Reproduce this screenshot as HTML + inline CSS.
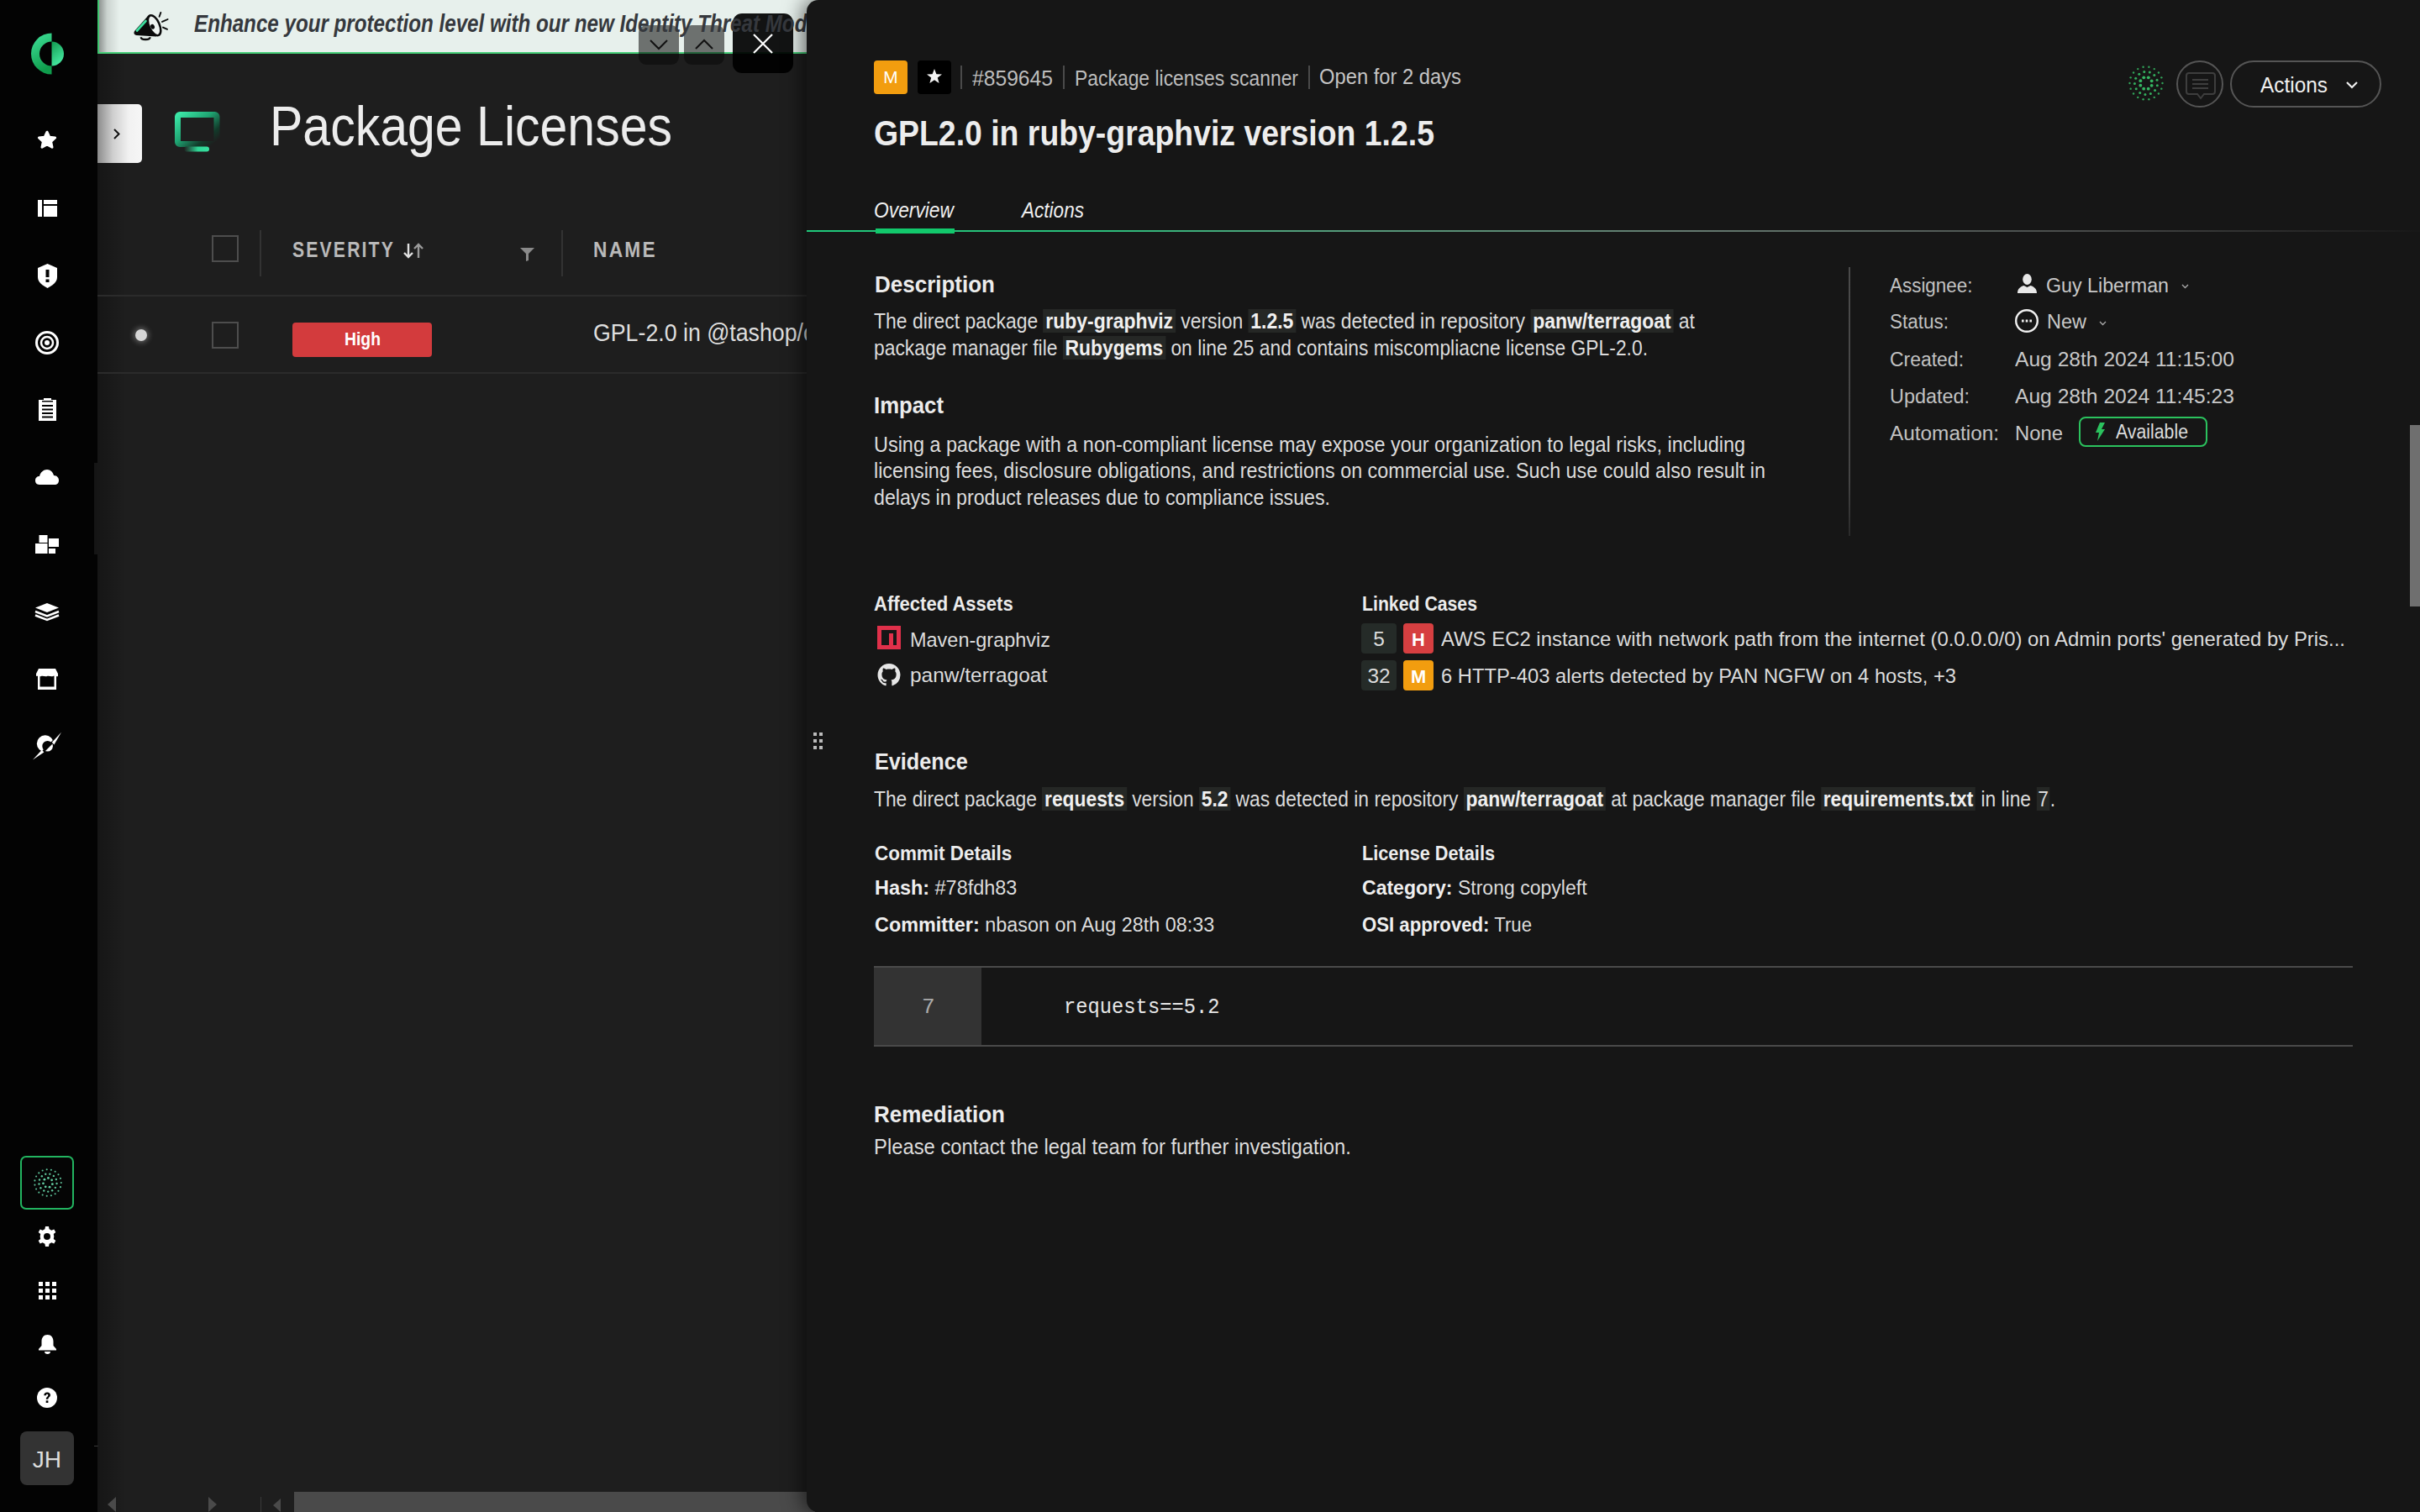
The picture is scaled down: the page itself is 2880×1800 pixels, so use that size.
<!DOCTYPE html>
<html><head><meta charset="utf-8"><style>
html,body{margin:0;padding:0}
body{width:2880px;height:1800px;overflow:hidden;position:relative;background:#1e1e1e;font-family:"Liberation Sans",sans-serif}
.a{position:absolute}
.t{position:absolute;white-space:nowrap;line-height:1;transform-origin:0 0}
.t b{font-weight:700;color:#efefef}
.hl{background:#252725;font-weight:700;color:#f0f0f0;padding:0 3px}
.hl2{background:#252725;padding:0 2px}
svg{position:absolute;overflow:visible}

</style></head><body>
<!-- sidebar -->
<div class="a" style="left:0;top:0;width:116px;height:1800px;background:#030303"></div>
<div class="a" style="left:112px;top:551px;width:4px;height:109px;background:#151515"></div>
<div class="a" style="left:112px;top:1721px;width:5px;height:1px;background:#3a3a3a"></div>
<!-- logo -->
<svg style="left:36px;top:39px" width="42" height="50" viewBox="0 0 42 50">
 <defs><linearGradient id="lg1" x1="0" y1="0" x2="0.3" y2="1"><stop offset="0" stop-color="#40e49c"/><stop offset="1" stop-color="#0f9c4c"/></linearGradient>
 <linearGradient id="lg2" x1="0" y1="0" x2="0.4" y2="1"><stop offset="0" stop-color="#129a50"/><stop offset="1" stop-color="#45e8a0"/></linearGradient></defs>
 <path d="M25.5 0.5 A24.5 24.5 0 0 0 25.5 49.5 L25.5 39.5 A14.5 14.5 0 0 1 25.5 10.5 Z" fill="url(#lg1)"/>
 <path d="M25.5 10.5 A14.5 14.5 0 0 1 25.5 39.5 Z" fill="url(#lg2)"/>
</svg>
<!-- star -->
<svg style="left:44px;top:155px" width="24" height="23" viewBox="0 0 24 23"><path d="M12 2.2 L14.9 8.3 L21.6 9 L16.6 13.6 L18 20.3 L12 16.9 L6 20.3 L7.4 13.6 L2.4 9 L9.1 8.3 Z" fill="#fff" stroke="#fff" stroke-width="3" stroke-linejoin="round"/></svg>
<!-- layout -->
<svg style="left:45px;top:238px" width="23" height="20" viewBox="0 0 23 20"><rect x="0" y="0" width="5" height="20" fill="#fff"/><rect x="7" y="0" width="16" height="5" fill="#fff"/><rect x="7" y="7" width="16" height="13" fill="#fff"/></svg>
<!-- shield -->
<svg style="left:45px;top:314px" width="23" height="29" viewBox="0 0 23 29"><path d="M11.5 0 L23 5 L23 16 C23 22 17 26 11.5 29 C6 26 0 22 0 16 L0 5 Z" fill="#fff"/><rect x="9.5" y="7" width="4" height="9" fill="#030303"/><rect x="9.5" y="18.5" width="4" height="3.5" fill="#030303"/></svg>
<!-- target -->
<svg style="left:42px;top:394px" width="28" height="28" viewBox="0 0 28 28"><circle cx="14" cy="14" r="12.5" fill="none" stroke="#fff" stroke-width="3"/><circle cx="14" cy="14" r="7" fill="none" stroke="#fff" stroke-width="2.5"/><circle cx="14" cy="14" r="3" fill="#fff"/></svg>
<!-- clipboard -->
<svg style="left:46px;top:474px" width="21" height="27" viewBox="0 0 21 27"><rect x="0" y="2" width="21" height="25" fill="#fff"/><rect x="6" y="0" width="9" height="4" fill="#fff"/><rect x="4" y="3" width="13" height="1.5" fill="#030303"/><rect x="4" y="8" width="13" height="2" fill="#030303"/><rect x="4" y="12.5" width="13" height="2" fill="#030303"/><rect x="4" y="17" width="13" height="2" fill="#030303"/><rect x="4" y="21.5" width="13" height="2" fill="#030303"/></svg>
<!-- cloud -->
<svg style="left:42px;top:559px" width="28" height="18" viewBox="0 0 28 18"><path d="M5 18 C1 18 0 15 0 13 C0 10 2 8 5 8 C6 3 10 0 14 0 C18 0 21 3 22 7 C26 7 28 10 28 13 C28 16 26 18 23 18 Z" fill="#fff"/></svg>
<!-- blocks -->
<svg style="left:42px;top:637px" width="28" height="22" viewBox="0 0 28 22"><rect x="4.5" y="0" width="10" height="9" fill="#fff"/><rect x="0" y="10" width="14.5" height="12" fill="#fff"/><rect x="16" y="4" width="12" height="10" fill="#fff"/><rect x="16" y="16" width="8" height="6" fill="#fff"/></svg>
<!-- layers -->
<svg style="left:42px;top:718px" width="28" height="21" viewBox="0 0 28 21"><path d="M14 0 L28 5.5 L14 11 L0 5.5 Z" fill="#fff"/><path d="M0 10 L14 15.5 L28 10" fill="none" stroke="#fff" stroke-width="2.5"/><path d="M0 14.5 L14 20 L28 14.5" fill="none" stroke="#fff" stroke-width="2.5"/></svg>
<!-- store -->
<svg style="left:43px;top:796px" width="26" height="25" viewBox="0 0 26 25"><path d="M3 0 L23 0 L26 6 L26 9 C24 10 22 8 20 9 C18 10 15 8 13 9 C11 10 8 8 6 9 C4 10 2 8 0 9 L0 6 Z" fill="#fff"/><path d="M2 8 L2 25 L24 25 L24 8 L21.5 9 L21.5 21.5 L4.5 21.5 L4.5 9 Z" fill="#fff"/></svg>
<!-- compass -->
<svg style="left:34px;top:866px" width="44" height="44" viewBox="0 0 44 44">
 <defs>
  <clipPath id="cpA"><polygon points="-10,-10 54,-10 -10,54" transform="translate(-1.0,-1.0) translate(0.0,2.0)"/></clipPath>
  <clipPath id="cpB"><polygon points="54,-10 54,54 -10,54" transform="translate(1.0,1.0) translate(0.0,2.0)"/></clipPath>
 </defs>
 <path clip-path="url(#cpA)" fill-rule="evenodd" fill="#fff" d="M9.8 19.2 A10 10 0 1 0 29.8 19.2 A10 10 0 1 0 9.8 19.2 Z M16.3 22.3 A6.3 6.3 0 1 0 28.9 22.3 A6.3 6.3 0 1 0 16.3 22.3 Z"/>
 <circle clip-path="url(#cpB)" cx="22.6" cy="22.3" r="6.3" fill="#fff"/>
 <polygon points="5,38.6 15.8,26.8 18.4,29.4" fill="#fff"/>
 <polygon points="39,5.8 27.8,17.8 30.4,20.4" fill="#fff"/>
</svg>

<!-- bottom sidebar -->
<div class="a" style="left:24px;top:1376px;width:60px;height:60px;border:2px solid #22b460;border-radius:7px;background:#050505"></div>
<svg style="left:33px;top:1384px" width="48" height="48" viewBox="-24 -24 48 48" id="dots1"><circle cx="5.35" cy="1.65" r="1.40" fill="#6ee4b4" fill-opacity="0.9"/><circle cx="2.04" cy="5.21" r="1.40" fill="#6ee4b4" fill-opacity="0.9"/><circle cx="-2.80" cy="4.85" r="1.40" fill="#6ee4b4" fill-opacity="0.9"/><circle cx="-5.54" cy="0.83" r="1.40" fill="#6ee4b4" fill-opacity="0.9"/><circle cx="-4.10" cy="-3.81" r="1.40" fill="#6ee4b4" fill-opacity="0.9"/><circle cx="0.42" cy="-5.58" r="1.40" fill="#6ee4b4" fill-opacity="0.9"/><circle cx="4.63" cy="-3.15" r="1.40" fill="#6ee4b4" fill-opacity="0.9"/><circle cx="10.55" cy="1.06" r="1.20" fill="#6ee4b4" fill-opacity="0.85"/><circle cx="8.85" cy="5.84" r="1.20" fill="#6ee4b4" fill-opacity="0.85"/><circle cx="5.12" cy="9.28" r="1.20" fill="#6ee4b4" fill-opacity="0.85"/><circle cx="0.22" cy="10.60" r="1.20" fill="#6ee4b4" fill-opacity="0.85"/><circle cx="-4.73" cy="9.49" r="1.20" fill="#6ee4b4" fill-opacity="0.85"/><circle cx="-8.60" cy="6.20" r="1.20" fill="#6ee4b4" fill-opacity="0.85"/><circle cx="-10.49" cy="1.50" r="1.20" fill="#6ee4b4" fill-opacity="0.85"/><circle cx="-9.99" cy="-3.55" r="1.20" fill="#6ee4b4" fill-opacity="0.85"/><circle cx="-7.19" cy="-7.79" r="1.20" fill="#6ee4b4" fill-opacity="0.85"/><circle cx="-2.75" cy="-10.24" r="1.20" fill="#6ee4b4" fill-opacity="0.85"/><circle cx="2.32" cy="-10.34" r="1.20" fill="#6ee4b4" fill-opacity="0.85"/><circle cx="6.86" cy="-8.08" r="1.20" fill="#6ee4b4" fill-opacity="0.85"/><circle cx="9.83" cy="-3.96" r="1.20" fill="#6ee4b4" fill-opacity="0.85"/><circle cx="15.80" cy="0.00" r="1.05" fill="#6ee4b4" fill-opacity="0.85"/><circle cx="14.94" cy="5.13" r="1.05" fill="#6ee4b4" fill-opacity="0.85"/><circle cx="12.47" cy="9.70" r="1.05" fill="#6ee4b4" fill-opacity="0.85"/><circle cx="8.64" cy="13.23" r="1.05" fill="#6ee4b4" fill-opacity="0.85"/><circle cx="3.88" cy="15.32" r="1.05" fill="#6ee4b4" fill-opacity="0.85"/><circle cx="-1.30" cy="15.75" r="1.05" fill="#6ee4b4" fill-opacity="0.85"/><circle cx="-6.35" cy="14.47" r="1.05" fill="#6ee4b4" fill-opacity="0.85"/><circle cx="-10.70" cy="11.62" r="1.05" fill="#6ee4b4" fill-opacity="0.85"/><circle cx="-13.90" cy="7.52" r="1.05" fill="#6ee4b4" fill-opacity="0.85"/><circle cx="-15.58" cy="2.60" r="1.05" fill="#6ee4b4" fill-opacity="0.85"/><circle cx="-15.58" cy="-2.60" r="1.05" fill="#6ee4b4" fill-opacity="0.85"/><circle cx="-13.90" cy="-7.52" r="1.05" fill="#6ee4b4" fill-opacity="0.85"/><circle cx="-10.70" cy="-11.62" r="1.05" fill="#6ee4b4" fill-opacity="0.85"/><circle cx="-6.35" cy="-14.47" r="1.05" fill="#6ee4b4" fill-opacity="0.85"/><circle cx="-1.30" cy="-15.75" r="1.05" fill="#6ee4b4" fill-opacity="0.85"/><circle cx="3.88" cy="-15.32" r="1.05" fill="#6ee4b4" fill-opacity="0.85"/><circle cx="8.64" cy="-13.23" r="1.05" fill="#6ee4b4" fill-opacity="0.85"/><circle cx="12.47" cy="-9.70" r="1.05" fill="#6ee4b4" fill-opacity="0.85"/><circle cx="14.94" cy="-5.13" r="1.05" fill="#6ee4b4" fill-opacity="0.85"/></svg>
<!-- gear -->
<svg style="left:44px;top:1460px" width="24" height="24" viewBox="0 0 24 24"><path fill="#fff" d="M10 0 H14 L14.6 3.2 A9 9 0 0 1 17.3 4.7 L20.3 3.5 L22.3 7 L19.8 9.1 A9 9 0 0 1 19.8 14.9 L22.3 17 L20.3 20.5 L17.3 19.3 A9 9 0 0 1 14.6 20.8 L14 24 H10 L9.4 20.8 A9 9 0 0 1 6.7 19.3 L3.7 20.5 L1.7 17 L4.2 14.9 A9 9 0 0 1 4.2 9.1 L1.7 7 L3.7 3.5 L6.7 4.7 A9 9 0 0 1 9.4 3.2 Z M12 8 A4 4 0 1 0 12 16 A4 4 0 1 0 12 8 Z"/></svg>
<!-- grid -->
<svg style="left:46px;top:1526px" width="21" height="21" viewBox="0 0 21 21" fill="#fff"><rect x="0" y="0" width="5" height="5"/><rect x="8" y="0" width="5" height="5"/><rect x="16" y="0" width="5" height="5"/><rect x="0" y="8" width="5" height="5"/><rect x="8" y="8" width="5" height="5"/><rect x="16" y="8" width="5" height="5"/><rect x="0" y="16" width="5" height="5"/><rect x="8" y="16" width="5" height="5"/><rect x="16" y="16" width="5" height="5"/></svg>
<!-- bell -->
<svg style="left:46px;top:1589px" width="21" height="23" viewBox="0 0 21 23" fill="#fff"><path d="M10.5 0 C15 0 17.5 3.5 17.5 8 L17.5 13 L21 17 L21 18.5 L0 18.5 L0 17 L3.5 13 L3.5 8 C3.5 3.5 6 0 10.5 0 Z"/><path d="M7 20 L14 20 C14 22 12.5 23 10.5 23 C8.5 23 7 22 7 20 Z"/></svg>
<!-- help -->
<svg style="left:44px;top:1652px" width="24" height="24" viewBox="0 0 24 24"><circle cx="12" cy="12" r="12" fill="#fff"/><path d="M8.3 9.2 C8.3 6.8 10 5.5 12.2 5.5 C14.5 5.5 16 6.9 16 8.8 C16 11.3 13.3 11.6 13.3 13.8 L10.8 13.8 C10.8 10.8 13.3 10.6 13.3 8.9 C13.3 8.2 12.8 7.7 12 7.7 C11.2 7.7 10.8 8.3 10.8 9.2 Z" fill="#030303"/><rect x="10.7" y="15.3" width="2.7" height="2.7" fill="#030303"/></svg>
<!-- JH box -->
<div class="a" style="left:24px;top:1704px;width:64px;height:64px;border-radius:8px;background:#333"></div>

<!-- main area -->
<div class="a" style="left:116px;top:64px;width:34px;height:1736px;background:linear-gradient(to right,rgba(0,0,0,0.28),rgba(0,0,0,0))"></div>
<div class="a" style="left:116px;top:0;width:2764px;height:62px;background:#e7f0ec;border-bottom:2px solid #46cf78"></div>
<div class="a" style="left:116px;top:0;width:2px;height:64px;background:#3ec46e"></div>
<div class="a" style="left:118px;top:0;width:24px;height:62px;background:linear-gradient(to right,rgba(0,0,0,0.38),rgba(0,0,0,0.12) 40%,rgba(0,0,0,0))"></div>
<!-- megaphone -->
<svg style="left:159px;top:14px" width="42" height="35" viewBox="0 0 42 35">
 <path d="M1.5 22.5 L17.5 4.5 L27 29.5 L3.5 28 C0.5 27.5 -0.5 25 1.5 22.5 Z" fill="#0a0a0a"/>
 <ellipse cx="24.6" cy="16.2" rx="6.2" ry="12.8" transform="rotate(-24 24.6 16.2)" fill="#eef3f0" stroke="#0a0a0a" stroke-width="2.5"/>
 <ellipse cx="22.6" cy="17.8" rx="2.3" ry="3" transform="rotate(-24 22.6 17.8)" fill="#0a0a0a"/>
 <path d="M4 22.5 L14.5 11" stroke="#3ee0a0" stroke-width="2.6" stroke-linecap="round"/>
 <path d="M8.8 30.2 C8.8 34 19.5 34 19.5 30.2" fill="none" stroke="#0a0a0a" stroke-width="2.4"/>
 <path d="M32.3 1 L30.6 5.8" stroke="#0a0a0a" stroke-width="1.9" stroke-linecap="round"/>
 <path d="M40.6 9 L34 11.9" stroke="#0a0a0a" stroke-width="1.9" stroke-linecap="round"/>
 <path d="M35 18.6 L40 20.8" stroke="#0a0a0a" stroke-width="1.9" stroke-linecap="round"/>
</svg>
<!-- banner buttons -->
<div class="a" style="left:760px;top:30px;width:48px;height:47px;border-radius:9px;background:rgba(10,10,10,0.55)"></div>
<svg style="left:773px;top:47px" width="22" height="12" viewBox="0 0 22 12"><path d="M1 1 L11 11 L21 1" fill="none" stroke="#111" stroke-width="2"/></svg>
<div class="a" style="left:814px;top:30px;width:48px;height:47px;border-radius:9px;background:rgba(10,10,10,0.55)"></div>
<svg style="left:827px;top:47px" width="22" height="12" viewBox="0 0 22 12"><path d="M1 11 L11 1 L21 11" fill="none" stroke="#111" stroke-width="2"/></svg>
<div class="a" style="left:872px;top:16px;width:72px;height:71px;border-radius:11px;background:rgba(0,0,0,0.92)"></div>
<svg style="left:896px;top:40px" width="24" height="24" viewBox="0 0 24 24"><path d="M1 1 L23 23 M23 1 L1 23" stroke="#fff" stroke-width="2.2"/></svg>

<!-- expand btn -->
<div class="a" style="left:116px;top:124px;width:53px;height:70px;border-radius:0 5px 5px 0;background:linear-gradient(to right,#8c8c8c 0%,#cfcfcf 35%,#f1f1f1 70%,#f6f6f6 100%)"></div>
<svg style="left:135px;top:153px" width="8" height="13" viewBox="0 0 8 13"><path d="M1 1 L6.5 6.5 L1 12" fill="none" stroke="#111" stroke-width="2"/></svg>
<!-- monitor icon -->
<svg style="left:208px;top:133px" width="56" height="48" viewBox="0 0 56 48">
 <defs><linearGradient id="mg" x1="0" y1="0" x2="1" y2="0.9"><stop offset="0" stop-color="#3be6a6"/><stop offset="0.45" stop-color="#1fa472"/><stop offset="0.8" stop-color="#123a2a"/><stop offset="1" stop-color="#1e1e1e"/></linearGradient>
 <linearGradient id="mg2" x1="0" y1="0" x2="1" y2="0"><stop offset="0" stop-color="#1e1e1e"/><stop offset="0.55" stop-color="#2fd595"/><stop offset="1" stop-color="#38e0a0"/></linearGradient></defs>
 <rect x="3.5" y="3.5" width="46.5" height="35" rx="2.5" fill="none" stroke="url(#mg)" stroke-width="7"/>
 <rect x="11" y="41.5" width="30" height="6" rx="3" fill="url(#mg2)"/>
</svg>

<!-- table header -->
<div class="a" style="left:252px;top:280px;width:28px;height:28px;border:2px solid #4d4d4d"></div>
<div class="a" style="left:309px;top:274px;width:2px;height:55px;background:#333"></div>
<svg style="left:480px;top:289px" width="25" height="19" viewBox="0 0 25 19"><path d="M6 1 V17 M1 12 L6 17 L11 12" fill="none" stroke="#e0e0e0" stroke-width="2.4"/><path d="M18 18 V2 M13 7 L18 2 L23 7" fill="none" stroke="#9a9a9a" stroke-width="2.4"/></svg>
<svg style="left:619px;top:294px" width="17" height="17" viewBox="0 0 17 17"><path d="M0 1 H17 L10 8 V16 L7 17 V8 Z" fill="#8a8a8a"/></svg>
<div class="a" style="left:668px;top:274px;width:2px;height:55px;background:#333"></div>
<div class="a" style="left:116px;top:351px;width:844px;height:2px;background:#2b2b2b"></div>
<div class="a" style="left:116px;top:443px;width:844px;height:2px;background:#2b2b2b"></div>
<!-- row -->
<div class="a" style="left:161px;top:392px;width:14px;height:14px;border-radius:50%;background:#d6d6d6;box-shadow:0 0 6px 2px rgba(255,255,255,0.3)"></div>
<div class="a" style="left:252px;top:383px;width:28px;height:28px;border:2px solid #4d4d4d"></div>
<div class="a" style="left:348px;top:384px;width:166px;height:41px;border-radius:4px;background:#d33b3d"></div>
<!-- bottom scrollbar -->
<svg style="left:126px;top:1782px" width="14" height="18" viewBox="0 0 14 18"><path d="M12 0 L2 9 L12 18 Z" fill="#4a4a4a"/></svg>
<svg style="left:246px;top:1782px" width="14" height="18" viewBox="0 0 14 18"><path d="M2 0 L12 9 L2 18 Z" fill="#4a4a4a"/></svg>
<div class="a" style="left:310px;top:1782px;width:1px;height:18px;background:#3a3a3a"></div>
<svg style="left:324px;top:1784px" width="12" height="16" viewBox="0 0 12 16"><path d="M10 0 L1 8 L10 16 Z" fill="#4a4a4a"/></svg>
<div class="a" style="left:350px;top:1776px;width:620px;height:24px;background:#4a4a4a"></div>
<div class="t" id="banner" style="left:231.0px;top:14.3px;font-size:28.64px;font-weight:700;font-style:italic;color:#35383d;font-family:'Liberation Sans',sans-serif;transform:scaleX(0.8446);">Enhance your protection level with our new Identity Threat Mod</div>
<div class="t" id="pkg" style="left:321.0px;top:115.6px;font-size:67.17px;font-weight:400;font-style:normal;color:#ececec;font-family:'Liberation Sans',sans-serif;transform:scaleX(0.8788);">Package Licenses</div>
<div class="t" id="sev" style="left:348.0px;top:284.8px;font-size:24.99px;font-weight:700;font-style:normal;color:#b9b9b9;font-family:'Liberation Sans',sans-serif;letter-spacing:2.5px;transform:scaleX(0.8497);">SEVERITY</div>
<div class="t" id="name" style="left:706.0px;top:284.8px;font-size:24.99px;font-weight:700;font-style:normal;color:#b9b9b9;font-family:'Liberation Sans',sans-serif;letter-spacing:2.5px;transform:scaleX(0.9095);">NAME</div>
<div class="t" id="gpl" style="left:706.0px;top:382.3px;font-size:29.16px;font-weight:400;font-style:normal;color:#dedede;font-family:'Liberation Sans',sans-serif;transform:scaleX(0.9167);">GPL-2.0 in @tashop/core</div>
<div class="t" id="high" style="left:409.5px;top:391.6px;font-size:22.91px;font-weight:700;font-style:normal;color:#ffffff;font-family:'Liberation Sans',sans-serif;transform:scaleX(0.8449);">High</div>
<div class="t" id="jh" style="left:38.8px;top:1724.2px;font-size:28.12px;font-weight:400;font-style:normal;color:#dddddd;font-family:'Liberation Sans',sans-serif;">JH</div>

<!-- drawer -->
<div class="a" style="left:960px;top:0;width:1920px;height:1800px;background:#161616;border-radius:14px 0 0 14px;box-shadow:-4px 0 24px rgba(0,0,0,0.6)"></div>
<!-- header badges -->
<div class="a" style="left:1040px;top:72px;width:40px;height:40px;border-radius:4px;background:#f29d0f"></div>
<div class="a" style="left:1092px;top:72px;width:40px;height:40px;border-radius:4px;background:#000"></div>
<svg style="left:1102px;top:81px" width="20" height="20" viewBox="0 0 20 20"><path d="M10 1 L12.4 7.2 L19 7.5 L13.8 11.6 L15.6 18 L10 14.3 L4.4 18 L6.2 11.6 L1 7.5 L7.6 7.2 Z" fill="#f4f4f4"/></svg>
<div class="a" style="left:1143px;top:78px;width:2px;height:28px;background:#4a4a4a"></div>
<div class="a" style="left:1265px;top:78px;width:2px;height:28px;background:#4a4a4a"></div>
<div class="a" style="left:1557px;top:78px;width:2px;height:28px;background:#4a4a4a"></div>
<!-- top right -->
<svg style="left:2526px;top:71px" width="56" height="56" viewBox="-28 -28 56 56" id="dots2"><circle cx="6.63" cy="2.80" r="1.90" fill="#38c86a" fill-opacity="0.9"/><circle cx="2.71" cy="6.67" r="1.90" fill="#38c86a" fill-opacity="0.9"/><circle cx="-2.80" cy="6.63" r="1.90" fill="#38c86a" fill-opacity="0.9"/><circle cx="-6.67" cy="2.71" r="1.90" fill="#38c86a" fill-opacity="0.9"/><circle cx="-6.63" cy="-2.80" r="1.90" fill="#38c86a" fill-opacity="0.9"/><circle cx="-2.71" cy="-6.67" r="1.90" fill="#38c86a" fill-opacity="0.9"/><circle cx="2.80" cy="-6.63" r="1.90" fill="#38c86a" fill-opacity="0.9"/><circle cx="6.67" cy="-2.71" r="1.90" fill="#38c86a" fill-opacity="0.9"/><circle cx="13.33" cy="2.70" r="1.50" fill="#38c86a" fill-opacity="0.85"/><circle cx="10.55" cy="8.59" r="1.50" fill="#38c86a" fill-opacity="0.85"/><circle cx="5.35" cy="12.50" r="1.50" fill="#38c86a" fill-opacity="0.85"/><circle cx="-1.08" cy="13.56" r="1.50" fill="#38c86a" fill-opacity="0.85"/><circle cx="-7.25" cy="11.50" r="1.50" fill="#38c86a" fill-opacity="0.85"/><circle cx="-11.77" cy="6.82" r="1.50" fill="#38c86a" fill-opacity="0.85"/><circle cx="-13.59" cy="0.57" r="1.50" fill="#38c86a" fill-opacity="0.85"/><circle cx="-12.29" cy="-5.81" r="1.50" fill="#38c86a" fill-opacity="0.85"/><circle cx="-8.19" cy="-10.86" r="1.50" fill="#38c86a" fill-opacity="0.85"/><circle cx="-2.20" cy="-13.42" r="1.50" fill="#38c86a" fill-opacity="0.85"/><circle cx="4.29" cy="-12.91" r="1.50" fill="#38c86a" fill-opacity="0.85"/><circle cx="9.80" cy="-9.43" r="1.50" fill="#38c86a" fill-opacity="0.85"/><circle cx="13.06" cy="-3.80" r="1.50" fill="#38c86a" fill-opacity="0.85"/><circle cx="19.50" cy="0.00" r="1.20" fill="#38c86a" fill-opacity="0.8"/><circle cx="18.32" cy="6.67" r="1.20" fill="#38c86a" fill-opacity="0.8"/><circle cx="14.94" cy="12.53" r="1.20" fill="#38c86a" fill-opacity="0.8"/><circle cx="9.75" cy="16.89" r="1.20" fill="#38c86a" fill-opacity="0.8"/><circle cx="3.39" cy="19.20" r="1.20" fill="#38c86a" fill-opacity="0.8"/><circle cx="-3.39" cy="19.20" r="1.20" fill="#38c86a" fill-opacity="0.8"/><circle cx="-9.75" cy="16.89" r="1.20" fill="#38c86a" fill-opacity="0.8"/><circle cx="-14.94" cy="12.53" r="1.20" fill="#38c86a" fill-opacity="0.8"/><circle cx="-18.32" cy="6.67" r="1.20" fill="#38c86a" fill-opacity="0.8"/><circle cx="-19.50" cy="0.00" r="1.20" fill="#38c86a" fill-opacity="0.8"/><circle cx="-18.32" cy="-6.67" r="1.20" fill="#38c86a" fill-opacity="0.8"/><circle cx="-14.94" cy="-12.53" r="1.20" fill="#38c86a" fill-opacity="0.8"/><circle cx="-9.75" cy="-16.89" r="1.20" fill="#38c86a" fill-opacity="0.8"/><circle cx="-3.39" cy="-19.20" r="1.20" fill="#38c86a" fill-opacity="0.8"/><circle cx="3.39" cy="-19.20" r="1.20" fill="#38c86a" fill-opacity="0.8"/><circle cx="9.75" cy="-16.89" r="1.20" fill="#38c86a" fill-opacity="0.8"/><circle cx="14.94" cy="-12.53" r="1.20" fill="#38c86a" fill-opacity="0.8"/><circle cx="18.32" cy="-6.67" r="1.20" fill="#38c86a" fill-opacity="0.8"/></svg>
<div class="a" style="left:2590px;top:72px;width:52px;height:52px;border:2px solid #555;border-radius:50%"></div>
<svg style="left:2601px;top:86px" width="36" height="32" viewBox="0 0 36 32"><path d="M4 1 H32 A3 3 0 0 1 35 4 V23 A3 3 0 0 1 32 26 H22 L18 31 L14 26 H4 A3 3 0 0 1 1 23 V4 A3 3 0 0 1 4 1 Z" fill="none" stroke="#3e3e3e" stroke-width="2"/><path d="M8 9 H27 M8 14 H27 M8 19 H27" stroke="#3e3e3e" stroke-width="1.8"/></svg>
<div class="a" style="left:2654px;top:72px;width:176px;height:52px;border:2px solid #555;border-radius:28px"></div>
<svg style="left:2792px;top:97px" width="14" height="9" viewBox="0 0 14 9"><path d="M1 1 L7 7 L13 1" fill="none" stroke="#f0f0f0" stroke-width="2.2"/></svg>
<!-- tabs -->
<div class="a" style="left:960px;top:274px;width:1920px;height:2px;background:linear-gradient(to right,#1fc87a 0%,#2bbf7c 18%,#52a07c 30%,#657a70 55%,#4a4d4c 78%,#2a2a2a 92%,#181818 100%)"></div>
<div class="a" style="left:1042px;top:272px;width:94px;height:6px;background:#12c86c"></div>
<!-- vertical sep -->
<div class="a" style="left:2200px;top:318px;width:2px;height:320px;background:linear-gradient(#4a4a4a,#444 80%,#2a2a2a)"></div>
<!-- meta icons -->
<svg style="left:2401px;top:326px" width="23" height="23" viewBox="0 0 23 23"><ellipse cx="11.5" cy="6.5" rx="5.3" ry="6.5" fill="#e8e8e8"/><path d="M0 23 C0 18 3 15.5 7.5 14 L11.5 16 L15.5 14 C20 15.5 23 18 23 23 Z" fill="#e8e8e8"/></svg>
<svg style="left:2596px;top:338px" width="9" height="6" viewBox="0 0 9 6"><path d="M1 1 L4.5 4.5 L8 1" fill="none" stroke="#aaa" stroke-width="1.3"/></svg>
<svg style="left:2398px;top:368px" width="28" height="28" viewBox="0 0 28 28"><circle cx="14" cy="14" r="12.8" fill="none" stroke="#f0f0f0" stroke-width="2.4"/><rect x="8" y="12.5" width="2.6" height="3" fill="#f0f0f0"/><rect x="12.7" y="12.5" width="2.6" height="3" fill="#f0f0f0"/><rect x="17.4" y="12.5" width="2.6" height="3" fill="#f0f0f0"/></svg>
<svg style="left:2498px;top:382px" width="9" height="6" viewBox="0 0 9 6"><path d="M1 1 L4.5 4.5 L8 1" fill="none" stroke="#aaa" stroke-width="1.3"/></svg>
<div class="a" style="left:2474px;top:496px;width:149px;height:32px;border:2px solid #2bc25e;border-radius:8px"></div>
<svg style="left:2494px;top:503px" width="12" height="22" viewBox="0 0 12 22"><path d="M5 0 L11 0 L7 8 L11 8 L2 22 L4 12 L0 12 Z" fill="#2bc25e"/></svg>
<!-- right scrollbar -->
<div class="a" style="left:2868px;top:506px;width:12px;height:216px;background:#6f6f6f"></div>
<!-- assets icons -->
<svg style="left:1044px;top:745px" width="28" height="28" viewBox="0 0 28 28"><rect x="0" y="0" width="28" height="28" fill="#e0304a"/><path d="M5 5 H23 V23 H19 V9 H14 V23 H5 Z" fill="#161616"/></svg>
<svg style="left:1044px;top:790px" width="28" height="27" viewBox="0 0 16 16"><path fill="#e6e6e6" d="M8 0C3.58 0 0 3.58 0 8c0 3.54 2.29 6.53 5.47 7.59.4.07.55-.17.55-.38 0-.19-.01-.82-.01-1.49-2.01.37-2.53-.49-2.69-.94-.09-.23-.48-.94-.82-1.13-.28-.15-.68-.52-.01-.53.63-.01 1.08.58 1.23.82.72 1.21 1.87.87 2.33.66.07-.52.28-.87.51-1.07-1.78-.2-3.64-.89-3.64-3.95 0-.87.31-1.59.82-2.15-.08-.2-.36-1.02.08-2.12 0 0 .67-.21 2.2.82.64-.18 1.32-.27 2-.27.68 0 1.36.09 2 .27 1.53-1.04 2.2-.82 2.2-.82.44 1.1.16 1.92.08 2.12.51.56.82 1.27.82 2.15 0 3.07-1.87 3.75-3.65 3.95.29.25.54.73.54 1.48 0 1.07-.01 1.93-.01 2.2 0 .21.15.46.55.38A8.013 8.013 0 0016 8c0-4.42-3.58-8-8-8z"/></svg>
<!-- linked badges -->
<div class="a" style="left:1620px;top:742px;width:42px;height:36px;border-radius:4px;background:#252b28"></div>
<div class="a" style="left:1670px;top:742px;width:36px;height:36px;border-radius:4px;background:#d63f41"></div>
<div class="a" style="left:1620px;top:786px;width:42px;height:36px;border-radius:4px;background:#252b28"></div>
<div class="a" style="left:1670px;top:786px;width:36px;height:36px;border-radius:4px;background:#f29d0f"></div>
<!-- drag handle -->
<svg style="left:968px;top:872px" width="12" height="22" viewBox="0 0 12 22" fill="#bbb"><rect x="0" y="0" width="4" height="4"/><rect x="7" y="0" width="4" height="4"/><rect x="0" y="8" width="4" height="4"/><rect x="7" y="8" width="4" height="4"/><rect x="0" y="16" width="4" height="4"/><rect x="7" y="16" width="4" height="4"/></svg>
<!-- code block -->
<div class="a" style="left:1040px;top:1150px;width:1760px;height:2px;background:#4a4a4a"></div>
<div class="a" style="left:1040px;top:1244px;width:1760px;height:2px;background:#4a4a4a"></div>
<div class="a" style="left:1040px;top:1152px;width:128px;height:92px;background:#333"></div>
<div class="t" id="num" style="left:1157.0px;top:80.8px;font-size:24.99px;font-weight:400;font-style:normal;color:#bdbdbd;font-family:'Liberation Sans',sans-serif;transform:scaleX(0.9868);">#859645</div>
<div class="t" id="scanner" style="left:1279.0px;top:80.8px;font-size:24.99px;font-weight:400;font-style:normal;color:#bdbdbd;font-family:'Liberation Sans',sans-serif;transform:scaleX(0.9164);">Package licenses scanner</div>
<div class="t" id="open" style="left:1570.0px;top:78.8px;font-size:24.99px;font-weight:400;font-style:normal;color:#c4c4c4;font-family:'Liberation Sans',sans-serif;transform:scaleX(0.9506);">Open for 2 days</div>
<div class="t" id="title" style="left:1040.0px;top:138.3px;font-size:42.18px;font-weight:700;font-style:normal;color:#ededed;font-family:'Liberation Sans',sans-serif;transform:scaleX(0.8866);">GPL2.0 in ruby-graphviz version 1.2.5</div>
<div class="t" id="tab1" style="left:1040.0px;top:237.0px;font-size:26.04px;font-weight:400;font-style:italic;color:#f0f0f0;font-family:'Liberation Sans',sans-serif;transform:scaleX(0.8756);">Overview</div>
<div class="t" id="tab2" style="left:1216.0px;top:237.0px;font-size:26.04px;font-weight:400;font-style:italic;color:#f0f0f0;font-family:'Liberation Sans',sans-serif;transform:scaleX(0.8668);">Actions</div>
<div class="t" id="actbtn" style="left:2690.0px;top:88.8px;font-size:24.99px;font-weight:400;font-style:normal;color:#f0f0f0;font-family:'Liberation Sans',sans-serif;transform:scaleX(0.9764);">Actions</div>
<div class="t" id="h_desc" style="left:1041.0px;top:324.6px;font-size:27.60px;font-weight:700;font-style:normal;color:#ececec;font-family:'Liberation Sans',sans-serif;transform:scaleX(0.9420);">Description</div>
<div class="t" id="d1" style="left:1040.0px;top:370.3px;font-size:24.99px;font-weight:400;font-style:normal;color:#dcdcdc;font-family:'Liberation Sans',sans-serif;transform:scaleX(0.9185);">The direct package <span class="hl">ruby-graphviz</span> version <span class="hl">1.2.5</span> was detected in repository <span class="hl">panw/terragoat</span> at</div>
<div class="t" id="d2" style="left:1040.0px;top:401.8px;font-size:24.99px;font-weight:400;font-style:normal;color:#dcdcdc;font-family:'Liberation Sans',sans-serif;transform:scaleX(0.9143);">package manager file <span class="hl">Rubygems</span> on line 25 and contains miscompliacne license GPL-2.0.</div>
<div class="t" id="h_imp" style="left:1040.0px;top:468.6px;font-size:27.60px;font-weight:700;font-style:normal;color:#ececec;font-family:'Liberation Sans',sans-serif;transform:scaleX(0.9331);">Impact</div>
<div class="t" id="i1" style="left:1040.0px;top:516.8px;font-size:24.99px;font-weight:400;font-style:normal;color:#dcdcdc;font-family:'Liberation Sans',sans-serif;transform:scaleX(0.9381);">Using a package with a non-compliant license may expose your organization to legal risks, including</div>
<div class="t" id="i2" style="left:1040.0px;top:548.3px;font-size:24.99px;font-weight:400;font-style:normal;color:#dcdcdc;font-family:'Liberation Sans',sans-serif;transform:scaleX(0.9340);">licensing fees, disclosure obligations, and restrictions on commercial use. Such use could also result in</div>
<div class="t" id="i3" style="left:1040.0px;top:579.8px;font-size:24.99px;font-weight:400;font-style:normal;color:#dcdcdc;font-family:'Liberation Sans',sans-serif;transform:scaleX(0.9287);">delays in product releases due to compliance issues.</div>
<div class="t" id="lab0" style="left:2249.0px;top:327.7px;font-size:23.95px;font-weight:400;font-style:normal;color:#c2c2c2;font-family:'Liberation Sans',sans-serif;transform:scaleX(0.9370);">Assignee:</div>
<div class="t" id="lab1" style="left:2249.0px;top:371.2px;font-size:23.95px;font-weight:400;font-style:normal;color:#c2c2c2;font-family:'Liberation Sans',sans-serif;transform:scaleX(0.9394);">Status:</div>
<div class="t" id="lab2" style="left:2249.0px;top:415.7px;font-size:23.95px;font-weight:400;font-style:normal;color:#c2c2c2;font-family:'Liberation Sans',sans-serif;transform:scaleX(0.9585);">Created:</div>
<div class="t" id="lab3" style="left:2249.0px;top:459.7px;font-size:23.95px;font-weight:400;font-style:normal;color:#c2c2c2;font-family:'Liberation Sans',sans-serif;transform:scaleX(0.9778);">Updated:</div>
<div class="t" id="lab4" style="left:2249.0px;top:503.7px;font-size:23.95px;font-weight:400;font-style:normal;color:#c2c2c2;font-family:'Liberation Sans',sans-serif;transform:scaleX(1.0176);">Automation:</div>
<div class="t" id="guy" style="left:2434.5px;top:327.7px;font-size:23.95px;font-weight:400;font-style:normal;color:#c8c8c8;font-family:'Liberation Sans',sans-serif;transform:scaleX(0.9710);">Guy Liberman</div>
<div class="t" id="new" style="left:2435.5px;top:371.2px;font-size:23.95px;font-weight:400;font-style:normal;color:#c8c8c8;font-family:'Liberation Sans',sans-serif;transform:scaleX(0.9814);">New</div>
<div class="t" id="created" style="left:2398.0px;top:415.7px;font-size:23.95px;font-weight:400;font-style:normal;color:#c8c8c8;font-family:'Liberation Sans',sans-serif;transform:scaleX(1.0284);">Aug 28th 2024 11:15:00</div>
<div class="t" id="updated" style="left:2398.0px;top:459.7px;font-size:23.95px;font-weight:400;font-style:normal;color:#c8c8c8;font-family:'Liberation Sans',sans-serif;transform:scaleX(1.0284);">Aug 28th 2024 11:45:23</div>
<div class="t" id="none" style="left:2398.0px;top:503.7px;font-size:23.95px;font-weight:400;font-style:normal;color:#c8c8c8;font-family:'Liberation Sans',sans-serif;transform:scaleX(0.9959);">None</div>
<div class="t" id="avail" style="left:2518.0px;top:501.7px;font-size:23.95px;font-weight:400;font-style:normal;color:#dcdcdc;font-family:'Liberation Sans',sans-serif;transform:scaleX(0.8892);">Available</div>
<div class="t" id="h_aff" style="left:1040.3px;top:707.0px;font-size:24.47px;font-weight:700;font-style:normal;color:#ececec;font-family:'Liberation Sans',sans-serif;transform:scaleX(0.9004);">Affected Assets</div>
<div class="t" id="maven" style="left:1083.0px;top:749.7px;font-size:24.47px;font-weight:400;font-style:normal;color:#dcdcdc;font-family:'Liberation Sans',sans-serif;transform:scaleX(0.9593);">Maven-graphviz</div>
<div class="t" id="panw" style="left:1083.0px;top:792.3px;font-size:24.47px;font-weight:400;font-style:normal;color:#dcdcdc;font-family:'Liberation Sans',sans-serif;">panw/terragoat</div>
<div class="t" id="h_link" style="left:1621.0px;top:707.0px;font-size:24.47px;font-weight:700;font-style:normal;color:#ececec;font-family:'Liberation Sans',sans-serif;transform:scaleX(0.8684);">Linked Cases</div>
<div class="t" id="case1" style="left:1714.6px;top:749.0px;font-size:24.47px;font-weight:400;font-style:normal;color:#dcdcdc;font-family:'Liberation Sans',sans-serif;transform:scaleX(0.9770);">AWS EC2 instance with network path from the internet (0.0.0.0/0) on Admin ports' generated by Pris...</div>
<div class="t" id="case2" style="left:1714.6px;top:792.6px;font-size:24.47px;font-weight:400;font-style:normal;color:#dcdcdc;font-family:'Liberation Sans',sans-serif;transform:scaleX(0.9711);">6 HTTP-403 alerts detected by PAN NGFW on 4 hosts, +3</div>
<div class="t" id="c5" style="left:1634.2px;top:749.0px;font-size:24.47px;font-weight:400;font-style:normal;color:#dcdcdc;font-family:'Liberation Sans',sans-serif;">5</div>
<div class="t" id="c32" style="left:1627.4px;top:792.6px;font-size:24.47px;font-weight:400;font-style:normal;color:#dcdcdc;font-family:'Liberation Sans',sans-serif;">32</div>
<div class="t" id="cH" style="left:1680.1px;top:751.2px;font-size:21.87px;font-weight:700;font-style:normal;color:#ffffff;font-family:'Liberation Sans',sans-serif;">H</div>
<div class="t" id="cM" style="left:1678.9px;top:794.8px;font-size:21.87px;font-weight:700;font-style:normal;color:#ffffff;font-family:'Liberation Sans',sans-serif;">M</div>
<div class="t" id="h_evi" style="left:1040.7px;top:892.6px;font-size:27.60px;font-weight:700;font-style:normal;color:#ececec;font-family:'Liberation Sans',sans-serif;transform:scaleX(0.9136);">Evidence</div>
<div class="t" id="e1" style="left:1040.0px;top:938.6px;font-size:24.99px;font-weight:400;font-style:normal;color:#dcdcdc;font-family:'Liberation Sans',sans-serif;transform:scaleX(0.9128);">The direct package <span class="hl">requests</span> version <span class="hl">5.2</span> was detected in repository <span class="hl">panw/terragoat</span> at package manager file <span class="hl">requirements.txt</span> in line <span class="hl2">7</span>.</div>
<div class="t" id="h_com" style="left:1040.7px;top:1003.5px;font-size:23.95px;font-weight:700;font-style:normal;color:#ececec;font-family:'Liberation Sans',sans-serif;transform:scaleX(0.9372);">Commit Details</div>
<div class="t" id="h_lic" style="left:1621.0px;top:1003.5px;font-size:23.95px;font-weight:700;font-style:normal;color:#ececec;font-family:'Liberation Sans',sans-serif;transform:scaleX(0.9065);">License Details</div>
<div class="t" id="hash" style="left:1040.7px;top:1045.2px;font-size:23.95px;font-weight:400;font-style:normal;color:#dcdcdc;font-family:'Liberation Sans',sans-serif;transform:scaleX(0.9785);"><b>Hash:</b> #78fdh83</div>
<div class="t" id="comm" style="left:1040.7px;top:1088.7px;font-size:23.95px;font-weight:400;font-style:normal;color:#dcdcdc;font-family:'Liberation Sans',sans-serif;transform:scaleX(0.9769);"><b>Committer:</b> nbason on Aug 28th 08:33</div>
<div class="t" id="cat" style="left:1621.0px;top:1045.2px;font-size:23.95px;font-weight:400;font-style:normal;color:#dcdcdc;font-family:'Liberation Sans',sans-serif;transform:scaleX(0.9624);"><b>Category:</b> Strong copyleft</div>
<div class="t" id="osi" style="left:1621.0px;top:1088.7px;font-size:23.95px;font-weight:400;font-style:normal;color:#dcdcdc;font-family:'Liberation Sans',sans-serif;transform:scaleX(0.9259);"><b>OSI approved:</b> True</div>
<div class="t" id="ln7" style="left:1097.0px;top:1186.0px;font-size:26.05px;font-weight:400;font-style:normal;color:#aaaaaa;font-family:'Liberation Mono',monospace;">7</div>
<div class="t" id="code" style="left:1265.5px;top:1186.0px;font-size:26.05px;font-weight:400;font-style:normal;color:#e6e6e6;font-family:'Liberation Mono',monospace;transform:scaleX(0.9129);">requests==5.2</div>
<div class="t" id="h_rem" style="left:1040.0px;top:1312.6px;font-size:27.60px;font-weight:700;font-style:normal;color:#ececec;font-family:'Liberation Sans',sans-serif;transform:scaleX(0.9421);">Remediation</div>
<div class="t" id="rem" style="left:1040.0px;top:1352.8px;font-size:24.99px;font-weight:400;font-style:normal;color:#dcdcdc;font-family:'Liberation Sans',sans-serif;transform:scaleX(0.9533);">Please contact the legal team for further investigation.</div>
<div class="t" id="mbadge" style="left:1051.3px;top:82.4px;font-size:20.83px;font-weight:400;font-style:normal;color:#ffffff;font-family:'Liberation Sans',sans-serif;">M</div>

</body></html>
